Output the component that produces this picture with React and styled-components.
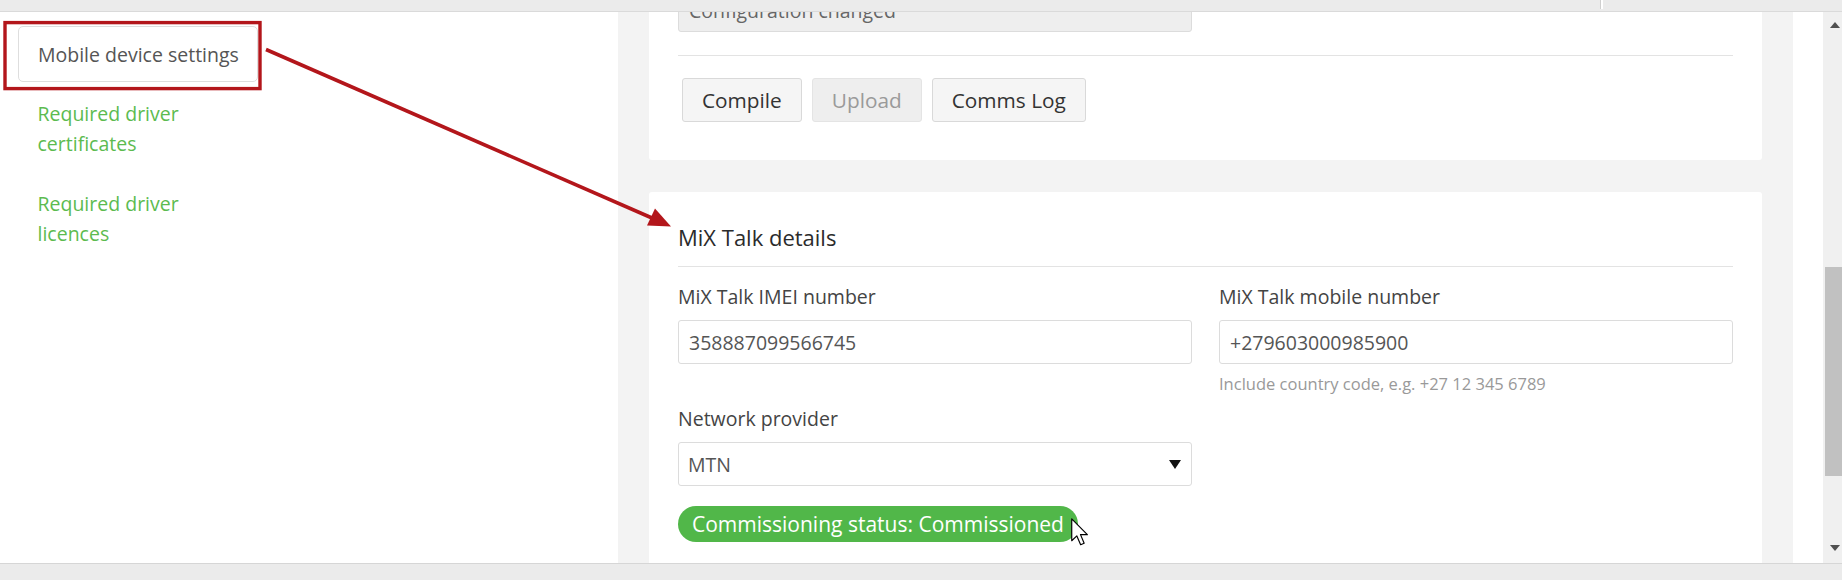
import React from 'react';
import styled, { createGlobalStyle } from 'styled-components';

const GlobalStyle = createGlobalStyle`
  html, body {
    margin: 0;
    padding: 0;
    background: #ffffff;
  }
  body {
    font-family: "Open Sans", "Liberation Sans", sans-serif;
    color: #333;
  }
  * {
    box-sizing: border-box;
  }
`;

const navLinks = [
  'Required driver certificates',
  'Required driver licences',
];

const App = () => {
  return (
    <Page>
      <GlobalStyle />
      <TopBar>
        <TopDivider />
      </TopBar>

      <Main>
        <Sidebar>
          <SideButton>Mobile device settings</SideButton>
          <NavList>
            {navLinks.map((link) => (
              <NavLink key={link}>{link}</NavLink>
            ))}
          </NavList>
        </Sidebar>

        <ContentColumn>
          <Scroller>
            <Card $pb={38}>
              <FieldGrid $mt={0}>
                <TextInput value="Configuration changed" disabled readOnly />
              </FieldGrid>
              <Rule />
              <ButtonRow>
                <Button>Compile</Button>
                <Button disabled>Upload</Button>
                <Button>Comms Log</Button>
              </ButtonRow>
            </Card>

            <Card $pt={30} $pb={40}>
              <CardTitle>MiX Talk details</CardTitle>
              <FieldGrid $mt={15}>
                <Field>
                  <Label>MiX Talk IMEI number</Label>
                  <TextInput value="358887099566745" readOnly />
                </Field>
                <Field>
                  <Label>MiX Talk mobile number</Label>
                  <TextInput value="+279603000985900" readOnly />
                  <HelpText>Include country code, e.g. +27 12 345 6789</HelpText>
                </Field>
                <Field>
                  <Label>Network provider</Label>
                  <SelectWrap>
                    <Select value="MTN" readOnly>
                      <option>MTN</option>
                      <option>Vodacom</option>
                      <option>Cell C</option>
                    </Select>
                  </SelectWrap>
                </Field>
              </FieldGrid>
              <StatusRow>
                <StatusPill>Commissioning status: Commissioned</StatusPill>
                <Cursor width="19" height="28" viewBox="0 0 13 19">
                  <path
                    d="M0.5 0.5 L0.5 15.5 L4 12.2 L6.6 18.2 L9 17.2 L6.5 11.3 L11.2 11.3 Z"
                    fill="#ffffff"
                    stroke="#000000"
                    strokeWidth="0.8"
                    strokeLinejoin="round"
                  />
                </Cursor>
              </StatusRow>
            </Card>
          </Scroller>
        </ContentColumn>

        <RightGutter />

        <ScrollTrack>
          <ScrollArrow $dir="up" />
          <ScrollThumb />
          <ScrollArrow $dir="down" />
        </ScrollTrack>
      </Main>

      <BottomBar />

      {/* callout: box round the sidebar button and an arrow to the details card */}
      <Callout width="1842" height="580" viewBox="0 0 1842 580">
        <rect x="5" y="22.6" width="255" height="66" fill="none" stroke="#b3161b" strokeWidth="3.4" />
        <line x1="266" y1="49.5" x2="652" y2="218" stroke="#b3161b" strokeWidth="3.6" />
        <polygon points="671,226.5 647,225.5 655,208.5" fill="#b3161b" />
      </Callout>
    </Page>
  );
};

export default App;

const Page = styled.div`
  position: relative;
  display: flex;
  flex-direction: column;
  width: 1842px;
  height: 580px;
  overflow: hidden;
`;

const TopBar = styled.div`
  position: relative;
  z-index: 2;
  height: 12px;
  flex-shrink: 0;
  background: #ebebeb;
  border-bottom: 1px solid #dadada;
`;

const TopDivider = styled.div`
  position: absolute;
  left: 1600px;
  top: 0;
  width: 3px;
  height: 9px;
  background: #ffffff;
  border-left: 1px solid #cfcfcf;
`;

const Main = styled.div`
  flex: 1;
  display: flex;
  min-height: 0;
`;

const Sidebar = styled.div`
  width: 618px;
  flex-shrink: 0;
  background: #ffffff;
  padding: 14px 0 0 18px;
`;

const SideButton = styled.div`
  display: flex;
  align-items: center;
  width: 240px;
  height: 56px;
  padding: 0 19px;
  border: 1px solid #dedede;
  border-radius: 5px;
  font-size: 19.5px;
  color: #555;
  white-space: nowrap;
`;

const NavList = styled.div`
  display: flex;
  flex-direction: column;
  gap: 30px;
  margin-top: 17px;
  padding-left: 19.5px;
`;

const NavLink = styled.a`
  display: block;
  max-width: 165px;
  font-size: 19.5px;
  line-height: 30px;
  color: #5cbb4f;
  text-decoration: none;
  cursor: pointer;
`;

const ContentColumn = styled.div`
  width: 1175px;
  flex-shrink: 0;
  background: #f3f3f3;
  padding: 0 31px;
  overflow: hidden;
`;

const Scroller = styled.div`
  display: flex;
  flex-direction: column;
  gap: 32px;
  margin-top: -54px;
`;

const Card = styled.div`
  background: #ffffff;
  border-radius: 3px;
  padding: ${(p) => p.$pt || 30}px 29px ${(p) => p.$pb || 30}px;
`;

const Rule = styled.div`
  height: 1px;
  background: #e3e3e3;
  margin: 23px 0 22px;
`;

const ButtonRow = styled.div`
  display: flex;
  gap: 10px;
  padding-left: 4px;
`;

const Button = styled.button`
  height: 44px;
  padding: 0 19px;
  font-family: inherit;
  font-size: 20.8px;
  color: #333;
  background: #f5f5f5;
  border: 1px solid #d9d9d9;
  border-radius: 3px;
  cursor: pointer;

  &:disabled {
    color: #9a9a9a;
    background: #eeeeee;
    border-color: #e4e4e4;
    cursor: default;
  }
`;

const CardTitle = styled.h3`
  margin: 0;
  font-size: 22px;
  font-weight: 400;
  line-height: 30px;
  color: #2b2b2b;
  padding-bottom: 14px;
  border-bottom: 1px solid #e3e3e3;
`;

const FieldGrid = styled.div`
  display: grid;
  grid-template-columns: 1fr 1fr;
  column-gap: 27px;
  row-gap: 8px;
  margin-top: ${(p) => p.$mt}px;
`;

const Field = styled.div`
  display: flex;
  flex-direction: column;
`;

const Label = styled.label`
  font-size: 19.5px;
  line-height: 30px;
  color: #444;
  margin-bottom: 8px;
`;

const TextInput = styled.input`
  width: 100%;
  height: 44px;
  padding: 0 10px;
  font-family: inherit;
  font-size: 19.5px;
  color: #555;
  background: #ffffff;
  border: 1px solid #dcdcdc;
  border-radius: 3px;
  outline: none;

  &:disabled {
    background: #eeeeee;
    color: #666;
  }
`;

const HelpText = styled.div`
  margin-top: 8px;
  font-size: 16.5px;
  line-height: 24px;
  color: #999;
`;

const SelectWrap = styled.div`
  position: relative;

  &::after {
    content: '';
    position: absolute;
    right: 11px;
    top: 18px;
    border-left: 6.5px solid transparent;
    border-right: 6.5px solid transparent;
    border-top: 9px solid #111;
    pointer-events: none;
  }
`;

const Select = styled.select`
  width: 100%;
  height: 44px;
  padding: 0 9px;
  font-family: inherit;
  font-size: 19.5px;
  color: #555;
  background: #ffffff;
  border: 1px solid #dcdcdc;
  border-radius: 3px;
  appearance: none;
  -webkit-appearance: none;
  outline: none;
`;

const StatusRow = styled.div`
  position: relative;
  display: flex;
  margin-top: 20px;
`;

const StatusPill = styled.span`
  display: inline-block;
  height: 36px;
  padding: 0 14px;
  line-height: 36px;
  font-size: 21px;
  color: #ffffff;
  background: #51b749;
  border-radius: 18px;
  white-space: nowrap;
`;

const Cursor = styled.svg`
  position: absolute;
  left: 393px;
  top: 12px;
  pointer-events: none;
`;

const RightGutter = styled.div`
  width: 30px;
  flex-shrink: 0;
  background: #ffffff;
`;

const ScrollTrack = styled.div`
  width: 19px;
  flex-shrink: 0;
  display: flex;
  flex-direction: column;
  align-items: flex-end;
  background: #f0f0f0;
`;

const ScrollArrow = styled.div`
  width: 19px;
  height: ${(p) => (p.$dir === 'up' ? 256 : 87)}px;
  display: flex;
  justify-content: center;
  align-items: ${(p) => (p.$dir === 'up' ? 'flex-start' : 'flex-end')};
  padding: ${(p) => (p.$dir === 'up' ? '10px 0 0 4px' : '0 0 12px 4px')};

  &::before {
    content: '';
    border-left: 5.5px solid transparent;
    border-right: 5.5px solid transparent;
    ${(p) =>
      p.$dir === 'up'
        ? 'border-bottom: 6px solid #505050;'
        : 'border-top: 6px solid #505050;'}
  }
`;

const ScrollThumb = styled.div`
  width: 17px;
  height: 209px;
  background: #c1c1c1;
  flex-shrink: 0;
`;

const BottomBar = styled.div`
  height: 17px;
  flex-shrink: 0;
  background: #ebebeb;
  border-top: 1px solid #d6d6d6;
`;

const Callout = styled.svg`
  position: absolute;
  left: 0;
  top: 0;
  pointer-events: none;
  z-index: 5;
`;
